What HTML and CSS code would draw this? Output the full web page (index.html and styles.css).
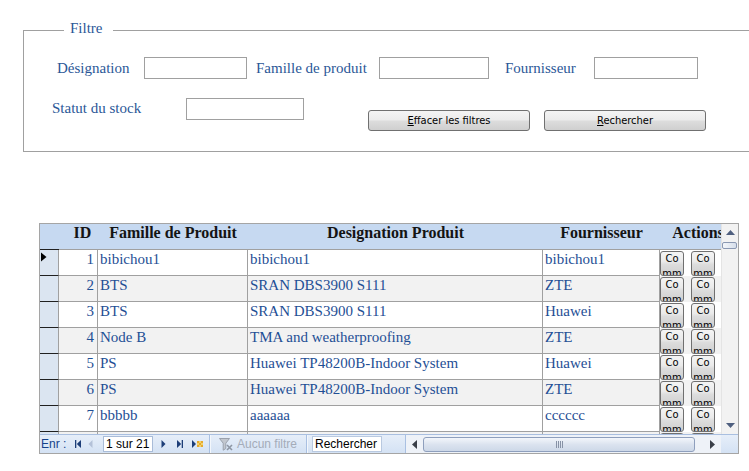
FILE: index.html
```html
<!DOCTYPE html>
<html lang="fr">
<head>
<meta charset="utf-8">
<title>Stock</title>
<link rel="stylesheet" href="styles.css">
</head>
<body>
<div class="filtre">
  <span class="legend">Filtre</span>
  <div class="frow frow1">
    <label class="lbl l-desig">Désignation</label>
    <input class="fld f-desig" type="text">
    <label class="lbl l-fam">Famille de produit</label>
    <input class="fld f-fam" type="text">
    <label class="lbl l-four">Fournisseur</label>
    <input class="fld f-four" type="text">
  </div>
  <div class="frow frow2">
    <label class="lbl l-stat">Statut du stock</label>
    <input class="fld f-stat" type="text">
    <button class="btn b-eff"><u>E</u>ffacer les filtres</button>
    <button class="btn b-rech"><u>R</u>echercher</button>
  </div>
</div>

<div class="grid">
  <div class="main">
    <div class="rows">
      <div class="hd hsel"></div>
      <div class="hd hid">ID</div>
      <div class="hd">Famille de Produit</div>
      <div class="hd">Designation Produit</div>
      <div class="hd">Fournisseur</div>
      <div class="hd">Actions</div>

      <div class="c sel"><svg class="cur" width="6" height="10" viewBox="0 0 6 10"><path d="M0 0.5 L5.5 5 L0 9.5 Z" fill="#000"/></svg></div>
      <div class="c id">1</div><div class="c txt">bibichou1</div><div class="c txt">bibichou1</div><div class="c txt">bibichou1</div>
      <div class="c act"><button class="mini"><span class="mt">Commande</span></button><button class="mini"><span class="mt">Commande</span></button></div>

      <div class="c sel"></div>
      <div class="c id alt">2</div><div class="c txt alt">BTS</div><div class="c txt alt">SRAN DBS3900 S111</div><div class="c txt alt">ZTE</div>
      <div class="c act alt"><button class="mini"><span class="mt">Commande</span></button><button class="mini"><span class="mt">Commande</span></button></div>

      <div class="c sel"></div>
      <div class="c id">3</div><div class="c txt">BTS</div><div class="c txt">SRAN DBS3900 S111</div><div class="c txt">Huawei</div>
      <div class="c act"><button class="mini"><span class="mt">Commande</span></button><button class="mini"><span class="mt">Commande</span></button></div>

      <div class="c sel"></div>
      <div class="c id alt">4</div><div class="c txt alt">Node B</div><div class="c txt alt">TMA and weatherproofing</div><div class="c txt alt">ZTE</div>
      <div class="c act alt"><button class="mini"><span class="mt">Commande</span></button><button class="mini"><span class="mt">Commande</span></button></div>

      <div class="c sel"></div>
      <div class="c id">5</div><div class="c txt">PS</div><div class="c txt">Huawei TP48200B-Indoor System</div><div class="c txt">Huawei</div>
      <div class="c act"><button class="mini"><span class="mt">Commande</span></button><button class="mini"><span class="mt">Commande</span></button></div>

      <div class="c sel"></div>
      <div class="c id alt">6</div><div class="c txt alt">PS</div><div class="c txt alt">Huawei TP48200B-Indoor System</div><div class="c txt alt">ZTE</div>
      <div class="c act alt"><button class="mini"><span class="mt">Commande</span></button><button class="mini"><span class="mt">Commande</span></button></div>

      <div class="c sel"></div>
      <div class="c id">7</div><div class="c txt">bbbbb</div><div class="c txt">aaaaaa</div><div class="c txt">cccccc</div>
      <div class="c act"><button class="mini"><span class="mt">Commande</span></button><button class="mini"><span class="mt">Commande</span></button></div>

      <div class="c sel"></div>
      <div class="c id alt">8</div><div class="c txt alt"></div><div class="c txt alt"></div><div class="c txt alt"></div>
      <div class="c act alt"><button class="mini"><span class="mt">Commande</span></button><button class="mini"><span class="mt">Commande</span></button></div>
    </div>
  </div>

  <div class="vscroll">
    <div class="sarrow"><svg width="9" height="5" viewBox="0 0 9 5"><path d="M0 5 L4.5 0 L9 5 Z" fill="#4f5f7f"/></svg></div>
    <div class="vthumb"></div>
    <div class="vspace"></div>
    <div class="sarrow"><svg width="9" height="5" viewBox="0 0 9 5"><path d="M0 0 L9 0 L4.5 5 Z" fill="#4f5f7f"/></svg></div>
  </div>

  <div class="nav">
    <span class="enr">Enr&nbsp;:</span>
    <span class="nb nb-first"><svg width="6" height="8" viewBox="0 0 6 8"><rect x="0" y="0" width="1.3" height="8" fill="#1d3e78"/><path d="M6 0 L1.8 4 L6 8 Z" fill="#1d3e78"/></svg></span>
    <span class="nb nb-prev"><svg width="5" height="8" viewBox="0 0 5 8"><path d="M4.5 0 L0.5 4 L4.5 8 Z" fill="#b3c1d8"/></svg></span>
    <span class="recbox">1 sur 21</span>
    <span class="nb nb-next"><svg width="5" height="8" viewBox="0 0 5 8"><path d="M0.5 0 L4.5 4 L0.5 8 Z" fill="#1d3e78"/></svg></span>
    <span class="nb nb-last"><svg width="6" height="8" viewBox="0 0 6 8"><path d="M0 0 L4.2 4 L0 8 Z" fill="#1d3e78"/><rect x="4.7" y="0" width="1.3" height="8" fill="#1d3e78"/></svg></span>
    <span class="nb nb-new"><svg width="11" height="8" viewBox="0 0 11 8"><path d="M0 0 L4 4 L0 8 Z" fill="#1d3e78"/><rect x="5" y="1" width="6" height="6" fill="#f2d36a"/><rect x="5" y="1" width="2" height="2" fill="#e6a92e"/><rect x="9" y="1" width="2" height="2" fill="#e6a92e"/><rect x="7" y="3" width="2" height="2" fill="#e6a92e"/><rect x="5" y="5" width="2" height="2" fill="#e6a92e"/><rect x="9" y="5" width="2" height="2" fill="#e6a92e"/></svg></span>
    <span class="sep"></span>
    <span class="filt"><svg width="14" height="13" viewBox="0 0 14 13"><path d="M0.5 0.5 H10.5 L6.8 5.2 V10.5 L4.2 12.2 V5.2 Z" fill="#c2c7cf" stroke="#9aa1ad" stroke-width="1"/><path d="M8 7 L13 12 M13 7 L8 12" stroke="#8d96a4" stroke-width="1.6"/></svg></span>
    <span class="nofilt">Aucun filtre</span>
    <span class="sep"></span>
    <span class="search">Rechercher</span>
    <span class="sep sep3"></span>
    <div class="hscroll">
      <span class="harrow"><svg width="5" height="9" viewBox="0 0 5 9"><path d="M5 0 L0 4.5 L5 9 Z" fill="#3a3f48"/></svg></span>
      <span class="hthumb"><span class="grip"></span></span>
      <span class="hspace"></span>
      <span class="harrow"><svg width="5" height="9" viewBox="0 0 5 9"><path d="M0 0 L5 4.5 L0 9 Z" fill="#3a3f48"/></svg></span>
      <span class="corner"></span>
    </div>
  </div>
</div>
</body>
</html>
```

FILE: styles.css
```css
html, body {
  margin: 0;
  padding: 0;
  background: #ffffff;
}
body {
  width: 749px;
  height: 471px;
  overflow: hidden;
  font-family: "Liberation Serif", "Times New Roman", serif;
}

/* ---------- filter frame ---------- */
.filtre {
  position: relative;
  margin: 30px 0 0 23px;
  height: 120px;
  border: 1px solid #a0a0a0;
  border-right: none;
}
.legend {
  position: absolute;
  top: -12px;
  left: 40px;
  padding: 0 10px 0 6px;
  background: #ffffff;
  color: #2b5797;
  font-size: 15px;
  line-height: 18px;
}
.frow {
  display: flex;
}
.frow1 {
  padding-top: 26px;
  align-items: center;
  height: 22px;
}
.frow2 {
  margin-top: 19px;
  align-items: flex-start;
}
.lbl {
  flex-shrink: 0;
  color: #2b5797;
  font-size: 15px;
  line-height: 21px;
  white-space: nowrap;
}
.fld {
  flex-shrink: 0;
  box-sizing: border-box;
  height: 22px;
  margin: 0;
  padding: 0 2px;
  border: 1px solid #a0a0a0;
  background: #ffffff;
}
.l-desig { margin-left: 33px; width: 87px; }
.f-desig { width: 103px; }
.l-fam { margin-left: 9px; width: 123px; }
.f-fam { width: 110px; }
.l-four { margin-left: 16px; width: 89px; }
.f-four { width: 104px; }
.l-stat { margin-left: 28px; width: 134px; }
.f-stat { width: 118px; }

.btn {
  flex-shrink: 0;
  box-sizing: border-box;
  width: 162px;
  height: 21px;
  margin-top: 12px;
  padding: 0;
  border: 1px solid #707070;
  border-radius: 3px;
  background: linear-gradient(#f4f4f4 0%, #ebebeb 48%, #dddddd 52%, #cfcfcf 100%);
  color: #000000;
  font-family: "DejaVu Sans Condensed", "Liberation Sans", sans-serif;
  font-size: 11px;
  line-height: 19px;
  text-align: center;
}
.btn u { text-decoration: underline; }
.b-eff { margin-left: 64px; }
.b-rech { margin-left: 14px; }

/* ---------- datasheet ---------- */
.grid {
  margin: 71px 0 0 39px;
  width: 700px;
  box-sizing: border-box;
  border: 1px solid #a5a5a5;
  display: grid;
  grid-template-columns: 681px 17px;
  grid-template-rows: 210px 19px;
}
.main {
  overflow: hidden;
}
.rows {
  display: grid;
  grid-template-columns: 19px 39px 150px 295px 117px 76px;
  grid-auto-rows: 26px;
  width: 696px;
}
.hd {
  box-sizing: border-box;
  background: #c6d9f1;
  border-bottom: 1px solid #a0a0a0;
  color: #141414;
  font-weight: bold;
  font-size: 16px;
  line-height: 18px;
  text-align: center;
  white-space: nowrap;
  overflow: hidden;
}
.hsel { border-bottom-color: #202020; }
.hid { padding-left: 8px; }

.c {
  box-sizing: border-box;
  background: #ffffff;
  color: #1f4f95;
  font-size: 15px;
  line-height: 17px;
  white-space: nowrap;
  overflow: hidden;
}
.c.alt { background: #f2f2f2; }
.sel {
  background: #dbe5f1;
  border-right: 1px solid #a0a0a0;
  border-bottom: 1px solid #202020;
}
.cur {
  display: block;
  margin: 2px 0 0 1px;
}
.id {
  text-align: right;
  padding: 1px 3px 0 0;
  border-right: 1px solid #a0a0a0;
  border-bottom: 1px solid #a0a0a0;
}
.txt {
  padding: 1px 0 0 2px;
  border-right: 1px solid #a0a0a0;
  border-bottom: 1px solid #a0a0a0;
}
.act {
  display: flex;
  gap: 7px;
  padding-top: 1px;
}
.mini {
  flex-shrink: 0;
  box-sizing: border-box;
  width: 24px;
  height: 25px;
  margin: 0;
  padding: 0 1px;
  border: 1px solid #707070;
  border-radius: 3px;
  background: linear-gradient(#f4f4f4 0%, #ebebeb 40%, #dcdcdc 55%, #cfcfcf 100%);
  color: #000000;
  font-family: "DejaVu Sans Condensed", "Liberation Sans", sans-serif;
  font-size: 11px;
  text-align: center;
  overflow: hidden;
  display: flex;
  flex-direction: column;
  justify-content: flex-start;
  align-items: stretch;
}
.mt {
  display: block;
  margin-top: -1px;
  line-height: 15px;
  word-break: break-all;
  white-space: normal;
}

/* vertical scrollbar */
.vscroll {
  display: flex;
  flex-direction: column;
  background: #f2f2f2;
  border-left: 1px solid #e4e4e4;
  box-sizing: border-box;
}
.sarrow {
  height: 17px;
  display: flex;
  align-items: center;
  justify-content: center;
  flex-shrink: 0;
}
.vthumb {
  flex-shrink: 0;
  height: 7px;
  margin: 1px 1px 0 0;
  box-sizing: border-box;
  border: 1px solid #8a98b2;
  border-radius: 2px;
  background: linear-gradient(to right, #f3f6fa, #d6deea);
}
.vspace { flex: 1; }

/* navigation bar */
.nav {
  grid-column: 1 / -1;
  display: flex;
  align-items: center;
  box-sizing: border-box;
  border-top: 1px solid #a9bfe0;
  background: linear-gradient(#e6eef9, #d4e2f4);
  font-family: "Liberation Sans", Arial, sans-serif;
  font-size: 12px;
  padding-left: 1px;
}
.enr {
  flex-shrink: 0;
  width: 34px;
  color: #15428b;
}
.nb {
  flex-shrink: 0;
  display: flex;
  align-items: center;
  height: 18px;
}
.nb-first { width: 13px; }
.nb-prev { width: 15px; }
.nb-next { width: 16px; margin-left: 8px; }
.nb-last { width: 15px; }
.nb-new { width: 17px; }
.nb svg { display: block; }
.recbox {
  flex-shrink: 0;
  box-sizing: border-box;
  width: 50px;
  height: 16px;
  padding-left: 2px;
  border: 1px solid #a9bcd8;
  background: #ffffff;
  color: #000000;
  line-height: 14px;
}
.sep {
  flex-shrink: 0;
  width: 1px;
  height: 18px;
  background: #a9c0e2;
  box-shadow: 1px 0 0 #f3f7fc;
}
.filt {
  flex-shrink: 0;
  width: 18px;
  margin-left: 9px;
  display: flex;
  align-items: center;
}
.filt svg { display: block; }
.nofilt {
  flex-shrink: 0;
  width: 69px;
  color: #a4acb9;
}
.search {
  flex-shrink: 0;
  box-sizing: border-box;
  width: 70px;
  height: 16px;
  margin-left: 5px;
  padding-left: 2px;
  border: 1px solid #b9c9e0;
  background: #ffffff;
  color: #000000;
  line-height: 14px;
}
.sep3 { margin-left: 23px; }
.hscroll {
  flex: 1;
  display: flex;
  align-items: center;
  height: 18px;
  background: #eef2f8;
}
.harrow {
  flex-shrink: 0;
  width: 17px;
  display: flex;
  align-items: center;
  justify-content: center;
}
.harrow svg { display: block; }
.hthumb {
  flex-shrink: 0;
  box-sizing: border-box;
  width: 272px;
  height: 15px;
  border: 1px solid #8e9fbd;
  border-radius: 3px;
  background: linear-gradient(#f3f6fb, #dbe3ef 50%, #cdd8e8);
  display: flex;
  align-items: center;
  justify-content: center;
}
.grip {
  width: 7px;
  height: 7px;
  background: repeating-linear-gradient(to right, #8792a6 0 1px, transparent 1px 2px);
}
.hspace {
  flex-shrink: 0;
  width: 9px;
}
.corner {
  flex: 1;
  align-self: stretch;
  background: linear-gradient(#e6eef9, #d4e2f4);
}
```
